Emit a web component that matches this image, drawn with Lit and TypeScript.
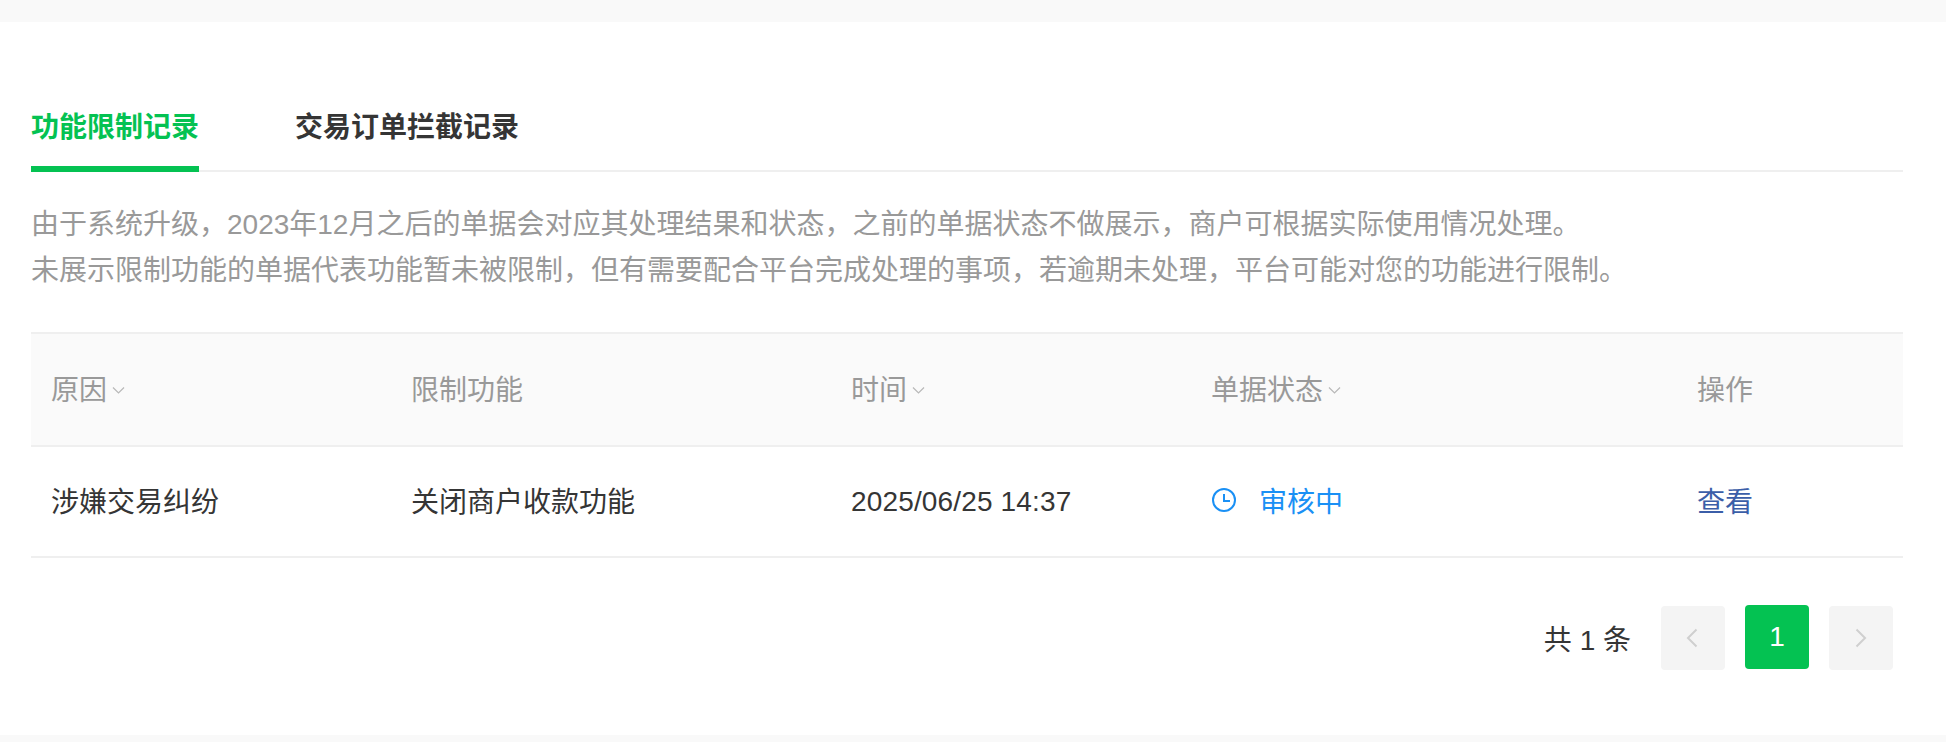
import { LitElement, html, css, svg } from 'lit';
import { customElement } from 'lit/decorators.js';

const chevronDown = svg`<path d="M1 1.5 L6.5 7 L12 1.5" fill="none" stroke="#b8b8b8" stroke-width="1.2" />`;

interface Column {
  label: string;
  sortable: boolean;
}

const columns: Column[] = [
  { label: '原因', sortable: true },
  { label: '限制功能', sortable: false },
  { label: '时间', sortable: true },
  { label: '单据状态', sortable: true },
  { label: '操作', sortable: false },
];

@customElement('app-root')
export class AppRoot extends LitElement {
  static styles = css`
    :host {
      display: block;
      height: 742px;
      overflow: hidden;
      background: #f9f9f9;
      font-family: 'Liberation Sans', 'Noto Sans CJK SC', sans-serif;
      color: #353535;
    }

    .panel {
      height: 713px;
      margin-top: 22px;
      padding: 0 43px 0 31px;
      box-sizing: border-box;
      background: #ffffff;
    }

    .tabs {
      display: flex;
      gap: 96px;
      height: 150px;
      padding-top: 84px;
      box-sizing: border-box;
      border-bottom: 2px solid #efefef;
    }

    .tab {
      height: 66px;
      line-height: 44px;
      font-size: 28px;
      font-weight: 700;
      box-sizing: border-box;
    }

    .tab.active {
      height: 66px;
      color: #04c252;
      border-bottom: 6px solid #04c252;
    }

    .notice {
      margin: 30px 0 0;
      font-size: 28px;
      line-height: 46px;
      color: #999999;
      white-space: nowrap;
    }

    .table {
      margin-top: 38px;
      display: grid;
      grid-template-columns: 360px 440px 360px 486px 226px;
      font-size: 28px;
    }

    .head,
    .cell {
      display: flex;
      align-items: center;
      padding-left: 20px;
    }

    .head {
      height: 115px;
      padding-bottom: 3px;
      background: #fafafa;
      color: #999999;
      border-top: 2px solid #efefef;
      border-bottom: 2px solid #efefef;
      box-sizing: border-box;
      gap: 5px;
    }

    .head svg {
      margin-top: 4px;
    }

    .cell {
      height: 111px;
      padding-bottom: 3px;
      border-bottom: 2px solid #efefef;
      box-sizing: border-box;
    }

    .time {
      padding-bottom: 0;
      letter-spacing: 0.15px;
    }

    .status {
      color: #1a90f5;
      gap: 23px;
      padding-left: 21px;
    }

    .link {
      color: #3b5ea8;
    }

    .pager {
      display: flex;
      justify-content: flex-end;
      align-items: center;
      gap: 20px;
      margin-top: 48px;
      padding-right: 10px;
    }

    .total {
      margin-right: 10px;
      font-size: 28px;
    }

    .page {
      width: 64px;
      height: 64px;
      display: flex;
      align-items: center;
      justify-content: center;
      border-radius: 4px;
      background: #f4f4f4;
    }

    .page.prev svg {
      margin-right: 2px;
    }

    .page.current {
      background: #04c252;
      color: #ffffff;
      font-size: 28px;
      position: relative;
      top: -1px;
    }
  `;

  render() {
    return html`
      <div class="panel">
        <div class="tabs">
          <div class="tab active">功能限制记录</div>
          <div class="tab">交易订单拦截记录</div>
        </div>

        <p class="notice">
          由于系统升级，2023年12月之后的单据会对应其处理结果和状态，之前的单据状态不做展示，商户可根据实际使用情况处理。<br />
          未展示限制功能的单据代表功能暂未被限制，但有需要配合平台完成处理的事项，若逾期未处理，平台可能对您的功能进行限制。
        </p>

        <div class="table">
          ${columns.map(
            (col) => html`
              <div class="head">
                ${col.label}
                ${col.sortable
                  ? html`<svg width="13" height="9" viewBox="0 0 13 9">${chevronDown}</svg>`
                  : ''}
              </div>
            `
          )}
          <div class="cell">涉嫌交易纠纷</div>
          <div class="cell">关闭商户收款功能</div>
          <div class="cell time">2025/06/25 14:37</div>
          <div class="cell status">
            <svg width="24" height="24" viewBox="0 0 24 24" fill="none" stroke="#1a90f5" stroke-width="2">
              <circle cx="12" cy="12" r="11" />
              <path d="M12 6 V13 H18" />
            </svg>
            审核中
          </div>
          <div class="cell link">查看</div>
        </div>

        <div class="pager">
          <span class="total">共 1 条</span>
          <div class="page prev">
            <svg width="12" height="20" viewBox="0 0 12 20" fill="none" stroke="#cfcfcf" stroke-width="2">
              <path d="M10.5 1.5 L2 10 L10.5 18.5" />
            </svg>
          </div>
          <div class="page current">1</div>
          <div class="page">
            <svg width="12" height="20" viewBox="0 0 12 20" fill="none" stroke="#cfcfcf" stroke-width="2">
              <path d="M1.5 1.5 L10 10 L1.5 18.5" />
            </svg>
          </div>
        </div>
      </div>
    `;
  }
}
